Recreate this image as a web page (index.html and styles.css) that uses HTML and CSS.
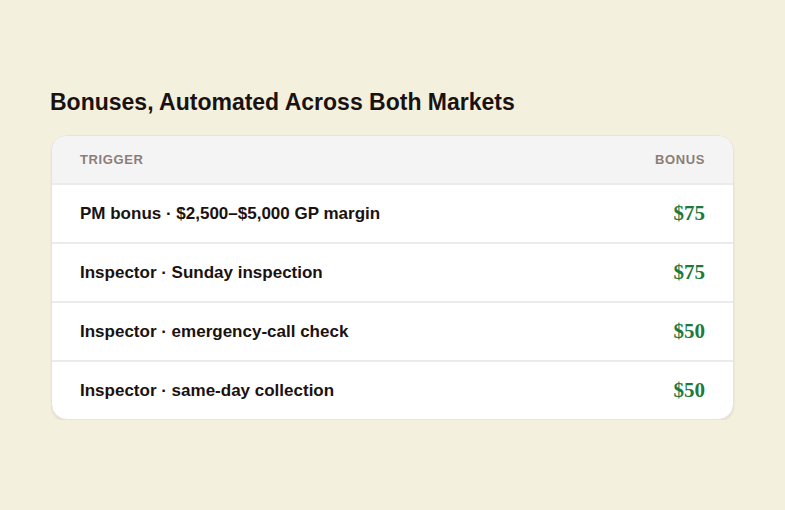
FILE: index.html
```html
<!DOCTYPE html>
<html>
<head>
<meta charset="utf-8">
<link rel="stylesheet" href="styles.css">
</head>
<body>
<main class="page">
  <h1 class="title">Bonuses, Automated Across Both Markets</h1>
  <div class="card">
    <div class="row head">
      <span class="col-label">Trigger</span>
      <span class="col-label">Bonus</span>
    </div>
    <div class="row">
      <span class="trigger">PM bonus · $2,500–$5,000 GP margin</span>
      <span class="amount">$75</span>
    </div>
    <div class="row">
      <span class="trigger">Inspector · Sunday inspection</span>
      <span class="amount">$75</span>
    </div>
    <div class="row">
      <span class="trigger">Inspector · emergency-call check</span>
      <span class="amount">$50</span>
    </div>
    <div class="row last">
      <span class="trigger">Inspector · same-day collection</span>
      <span class="amount">$50</span>
    </div>
  </div>
</main>
</body>
</html>
```
FILE: styles.css
```css
html, body {
  margin: 0;
  padding: 0;
  background: #f4f0de;
}
body {
  font-family: "Liberation Sans", Arial, sans-serif;
  color: #1a1210;
}
.page {
  padding: 88px 0 0 51px;
  width: 683px;
}
.title {
  margin: 0 0 19px -1px;
  font-size: 23px;
  font-weight: 700;
  line-height: 28px;
  color: #1a1210;
}
.card {
  background: #ffffff;
  border: 1px solid #e6e3df;
  border-radius: 16px;
  overflow: hidden;
  box-shadow: 0 2px 2px rgba(120, 110, 90, 0.12);
}
.row {
  display: flex;
  justify-content: space-between;
  align-items: center;
  height: 57px;
  padding: 0 28px;
  border-bottom: 2px solid #ebebeb;
}
.row.last {
  border-bottom: none;
}
.row.head {
  height: 47px;
  background: #f4f4f4;
}
.col-label {
  font-size: 13px;
  font-weight: 700;
  letter-spacing: 0.6px;
  text-transform: uppercase;
  color: #8a7e7b;
}
.trigger {
  font-size: 17px;
  font-weight: 700;
  color: #1a1210;
}
.amount {
  font-family: "Liberation Serif", "Times New Roman", serif;
  font-size: 21px;
  font-weight: 700;
  color: #1c7a3c;
}
```
